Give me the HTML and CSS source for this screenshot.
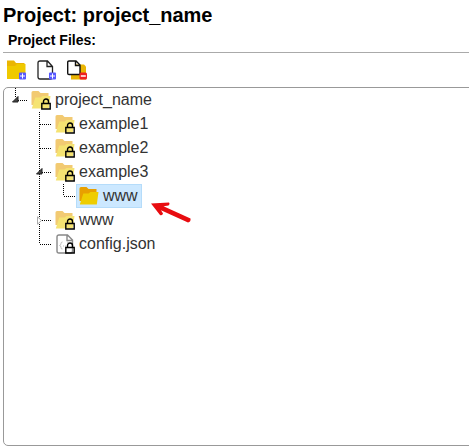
FILE: index.html
```html
<!DOCTYPE html>
<html lang="en">
<head>
<meta charset="utf-8">
<title>Project: project_name</title>
<link rel="stylesheet" href="styles.css">
</head>
<body>
<svg class="defs" width="0" height="0" aria-hidden="true">
  <symbol id="folder" viewBox="0 0 20 20">
    <path fill="#e8a000" d="M.5 2.500Q.5 1 2 1h5.500l2 2h8V8L3 15H.5z"/>
    <path fill="#eecd00" d="M4.300 7.500H9.500L11.500 6H19.500L17.800 18.500H.8z"/>
  </symbol>
  <symbol id="lock" viewBox="0 0 10 12">
    <path d="M2.500 5.500V3.500a2.500 2.500 0 0 1 5 0v2" fill="none" stroke="#000" stroke-width="1.400"/>
    <path d="M.8 5.500h8.400v5.500H.8z" fill="none" stroke="#000" stroke-width="1.400"/>
  </symbol>
  <symbol id="plus" viewBox="0 0 8 8">
    <rect width="7" height="7" x=".5" y=".5" rx="1" fill="#5658ff"/>
    <path d="M4 1.500v5M1.500 4h5" stroke="#fff"/>
  </symbol>
</svg>
<h1 class="title">Project: project_name</h1>
<h2 class="subtitle">Project Files:</h2>
<div class="toolbar">
  <svg class="tool" viewBox="0 0 22 22">
    <path fill="#eab503" d="M1 .5H8l2 2.500h8.500v16H1z"/>
    <path fill="#efc900" d="M1 6h8l2-2h8.500v15H1z"/>
    <use href="#plus" x="12.500" y="12" width="8" height="8"/>
  </svg>
  <svg class="tool" viewBox="0 0 22 22">
    <path d="M4 1h7.500l5 5.500V17q0 2-2 2H4q-2 0-2-2V3q0-2 2-2zM11 1.500V6.500h5" fill="#fff" stroke="#222" stroke-width="1.300"/>
    <use href="#plus" x="12.500" y="12" width="8" height="8"/>
  </svg>
  <svg class="tool" viewBox="0 0 22 22">
    <path fill="#eab503" d="M5 4.500h13l2 2v13H5z"/>
    <path d="M3 1h7l4 4v9.500H3q-1.300 0-1.300-1.300V2.300Q1.700 1 3 1zM9.500 1.500V5.500h4" fill="#fff" stroke="#111" stroke-width="1.400"/>
    <rect x="13.500" y="12.500" width="7.500" height="7" rx="1.500" fill="#ed2020"/>
    <path d="M14.800 16h5" stroke="#fff" stroke-width="1.500"/>
  </svg>
</div>
<div class="panel">
  <ul class="tree">
    <li class="node root">
      <div class="row"><svg class="toggle" viewBox="0 0 7 7"><path d="M.5 6L6 .5V6z" fill="#444" stroke="#222"/></svg>
        <svg class="icon" viewBox="0 0 20 20"><use class="faded" href="#folder" width="20" height="20"/><use href="#lock" x="10" y="8" width="10" height="12"/></svg><span class="label">project_name</span></div>
      <ul>
        <li class="node"><div class="row"><svg class="icon" viewBox="0 0 20 20"><use class="faded" href="#folder" width="20" height="20"/><use href="#lock" x="10" y="8" width="10" height="12"/></svg><span class="label">example1</span></div></li>
        <li class="node"><div class="row"><svg class="icon" viewBox="0 0 20 20"><use class="faded" href="#folder" width="20" height="20"/><use href="#lock" x="10" y="8" width="10" height="12"/></svg><span class="label">example2</span></div></li>
        <li class="node">
          <div class="row"><svg class="toggle" viewBox="0 0 7 7"><path d="M.5 6L6 .5V6z" fill="#444" stroke="#222"/></svg>
            <svg class="icon" viewBox="0 0 20 20"><use class="faded" href="#folder" width="20" height="20"/><use href="#lock" x="10" y="8" width="10" height="12"/></svg><span class="label">example3</span></div>
          <ul>
            <li class="node last"><div class="row"><span class="selected"><svg class="icon" viewBox="0 0 20 20"><use href="#folder" width="20" height="20"/></svg><span class="label">www</span></span>
              <svg class="pointer" viewBox="0 0 42 24"><path d="M1 2.500L19 1.500Q20.500 3 18.500 4.500L13.500 5.300L40.500 17.500Q41 21 38 21.500L11 9.300L13 12.500Q12.500 14.800 10 14z" fill="#e80c10"/></svg></div></li>
          </ul>
        </li>
        <li class="node"><div class="row"><svg class="toggle closed" viewBox="0 0 5 9"><path d="M.5 .8L4.500 4.500L.5 8.200z" fill="#fff" stroke="#aaa"/></svg>
          <svg class="icon" viewBox="0 0 20 20"><use class="faded" href="#folder" width="20" height="20"/><use href="#lock" x="10" y="8" width="10" height="12"/></svg><span class="label">www</span></div></li>
        <li class="node last"><div class="row"><svg class="icon" viewBox="0 0 20 20"><path d="M4 1h8.500l5 5V17q0 2-2 2H4q-2 0-2-2V3q0-2 2-2zM12 1.500V6.500h5" fill="#fff" stroke="#888" stroke-width="1.400"/><path d="M7.500 8Q6 8 6 9.500T4.500 11.500Q6 11.500 6 13.500T7.500 15M12 8q1.500 0 1.500 1.500" fill="none" stroke="#bbb"/><path d="M8 12h1M10 12h1" stroke="#bbb"/><use href="#lock" x="10" y="8" width="10" height="12"/></svg><span class="label">config.json</span></div></li>
      </ul>
    </li>
  </ul>
</div>
</body>
</html>
```
FILE: styles.css
```css
* { box-sizing: border-box; }
body {
  margin: 0;
  height: 448px;
  overflow: hidden;
  background: #fff;
  color: #000;
  font-family: "Liberation Sans", Arial, sans-serif;
}
.defs { position: absolute; }
svg { display: block; flex: none; }
.title {
  margin: 0;
  padding: 3px 0 0 3px;
  height: 30px;
  font-size: 20px;
  line-height: 24px;
  letter-spacing: -.03px;
}
.subtitle {
  margin: 0 0 0 3px;
  padding-left: 5px;
  height: 23px;
  border-bottom: 1px solid #aaa;
  font-size: 14px;
  line-height: 20px;
}
.toolbar {
  display: flex;
  gap: 8px;
  padding: 6px 0 0 6px;
  height: 34px;
}
.tool { width: 22px; height: 22px; }
.tool:first-child { margin-top: 1px; }
.tool:nth-child(2), .tool:nth-child(3) { margin-top: 1px; }
.panel {
  height: 359px;
  margin: 0 -10px 0 3px;
  border: 1px solid #999;
  border-radius: 5px;
}
.tree, .tree ul { margin: 0; padding: 0; list-style: none; }
.tree ul { padding-left: 24px; }
.node {
  position: relative;
  background: repeating-linear-gradient(to bottom, #000 0 1px, transparent 1px 2px) 11px 0 / 1px 100% no-repeat;
}
.node.last { background-size: 1px 12px; }
.node.root { background-size: 1px 10px; }
.row {
  position: relative;
  display: flex;
  align-items: center;
  height: 24px;
  padding-left: 27px;
  background: repeating-linear-gradient(to right, #000 0 1px, transparent 1px 2px) 12px 12px / 12px 1px no-repeat;
}
.icon { width: 20px; height: 20px; }
.faded { opacity: .55; }
.label {
  margin-left: 4px;
  color: #333;
  font-size: 16px;
  line-height: 24px;
}
.toggle { position: absolute; left: 8px; top: 8px; width: 7px; height: 7px; }
.toggle.closed { left: 9px; width: 5px; height: 9px; }
.selected {
  display: flex;
  align-items: center;
  height: 24px;
  margin-left: -3px;
  padding: 0 3px 0 2px;
  background: #cce8ff;
  border: 1px solid #b5dcfa;
}
.pointer { position: absolute; left: 98px; top: 17px; width: 42px; height: 24px; }
```
